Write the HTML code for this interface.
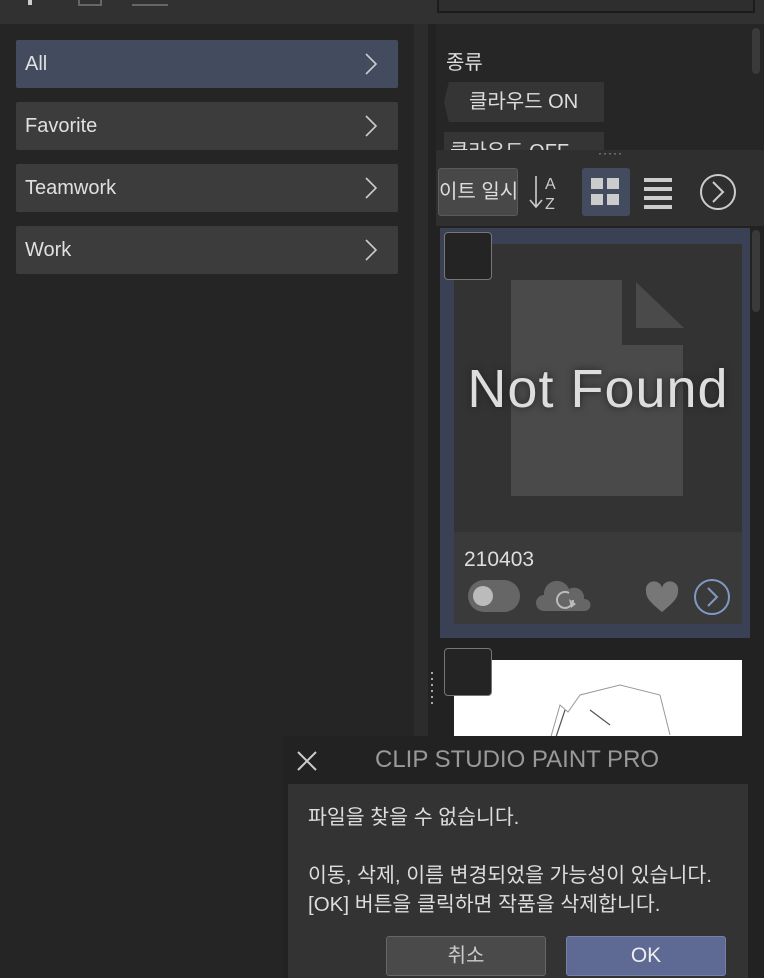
<!DOCTYPE html>
<html><head><meta charset="utf-8"><style>
*{margin:0;padding:0;box-sizing:border-box}
body{width:764px;height:978px;overflow:hidden;background:#2b2b2b;font-family:"Liberation Sans","Noto Sans CJK KR",sans-serif;color:#ddd;position:relative}
.a{position:absolute}
.btn{position:absolute;left:16px;width:382px;height:48px;background:#3c3c3c;border-radius:2px;font-size:20px;line-height:48px;padding-left:9px;color:#e0e0e0}
.btn svg{position:absolute;right:20px;top:13px}
</style></head><body>
<div class="a" style="left:0;top:0;width:764px;height:24px;background:#313131"></div>
<div class="a" style="left:437px;top:-4px;width:318px;height:17px;border:2px solid #1c1c1c;background:#2e2e2e"></div>
<div class="a" style="left:28px;top:0;width:4px;height:5px;background:#ccc"></div>
<div class="a" style="left:78px;top:0;width:24px;height:6px;border:2px solid #666;border-top:none"></div>
<div class="a" style="left:132px;top:4px;width:36px;height:2px;background:#666"></div>
<div class="a" style="left:0;top:24px;width:414px;height:954px;background:#252525"></div>
<div class="a" style="left:414px;top:24px;width:14px;height:954px;background:#2c2c2c"></div>
<div class="a" style="left:428px;top:24px;width:8px;height:954px;background:#222"></div>
<div class="btn" style="top:40px;background:#434b5e">All<svg width="14" height="22"><path d="M2 1l10 10-10 10" stroke="#ccc" stroke-width="1.6" fill="none"/></svg></div>
<div class="btn" style="top:102px">Favorite<svg width="14" height="22"><path d="M2 1l10 10-10 10" stroke="#ccc" stroke-width="1.6" fill="none"/></svg></div>
<div class="btn" style="top:164px">Teamwork<svg width="14" height="22"><path d="M2 1l10 10-10 10" stroke="#ccc" stroke-width="1.6" fill="none"/></svg></div>
<div class="btn" style="top:226px">Work<svg width="14" height="22"><path d="M2 1l10 10-10 10" stroke="#ccc" stroke-width="1.6" fill="none"/></svg></div>
<div class="a" style="left:436px;top:24px;width:328px;height:128px;background:#262626"></div>
<div class="a" style="left:752px;top:28px;width:8px;height:46px;background:#3a3a3a;border-radius:4px"></div>
<div class="a" style="left:446px;top:46px;font-size:20px;color:#ddd">종류</div>
<div class="a" style="left:444px;top:82px;width:160px;height:40px;background:#353535;font-size:20px;line-height:40px;padding-left:25px;clip-path:polygon(3% 0,100% 0,100% 100%,3% 100%,0 50%)">클라우드 ON</div>
<div class="a" style="left:444px;top:132px;width:160px;height:20px;background:#353535;overflow:hidden;font-size:20px;line-height:40px;padding-left:6px">클라우드 OFF</div>
<div class="a" style="left:436px;top:150px;width:328px;height:76px;background:#2f2f2f"></div>
<div class="a" style="left:598px;top:146px;font-size:12px;color:#aaa;letter-spacing:1px">·····</div>
<div class="a" style="left:438px;top:168px;width:80px;height:48px;background:#484848;border:1px solid #5a5a5a;border-radius:3px;font-size:20px;line-height:46px;padding-left:0;white-space:nowrap;overflow:hidden">이트 일시</div>
<svg class="a" style="left:526px;top:174px" width="38" height="36"><path d="M10 2v31M4 26l6 7 6-7" stroke="#ccc" stroke-width="1.6" fill="none"/><text x="19" y="15" font-size="16" fill="#ccc" font-family="Liberation Sans">A</text><text x="19" y="35" font-size="16" fill="#ccc" font-family="Liberation Sans">Z</text></svg>
<div class="a" style="left:582px;top:168px;width:48px;height:48px;background:#434b5e;border-radius:3px"></div>
<div class="a" style="left:591px;top:178px;width:12px;height:11px;background:#ccc"></div><div class="a" style="left:607px;top:178px;width:12px;height:11px;background:#ccc"></div>
<div class="a" style="left:591px;top:194px;width:12px;height:11px;background:#ccc"></div><div class="a" style="left:607px;top:194px;width:12px;height:11px;background:#ccc"></div>
<div class="a" style="left:644px;top:178px;width:28px;height:4px;background:#ccc;box-shadow:0 9px #ccc,0 18px #ccc,0 27px #ccc"></div>
<svg class="a" style="left:698px;top:172px" width="40" height="40"><circle cx="20" cy="20" r="17" stroke="#ccc" stroke-width="2" fill="none"/><path d="M15 10l10 10-10 10" stroke="#ccc" stroke-width="2" fill="none"/></svg>
<div class="a" style="left:436px;top:226px;width:328px;height:752px;background:#222"></div>
<div class="a" style="left:752px;top:230px;width:8px;height:82px;background:#3a3a3a;border-radius:4px"></div>
<div class="a" style="left:440px;top:228px;width:310px;height:410px;background:#3b4154"></div>
<div class="a" style="left:454px;top:244px;width:288px;height:288px;background:#333"></div>
<svg class="a" style="left:454px;top:244px" width="288" height="288"><path d="M57 36h111v65h61v151H57z" fill="#4a4a4a"/><path d="M182 38l48 46h-48z" fill="#4a4a4a"/></svg>
<div class="a" style="left:454px;top:358px;width:288px;text-align:center;font-size:54px;letter-spacing:1px;color:#ddd;text-shadow:0 0 8px #222;white-space:nowrap">Not Found</div>
<div class="a" style="left:444px;top:232px;width:48px;height:48px;background:#242424;border:1px solid #777;border-radius:4px"></div>
<div class="a" style="left:454px;top:532px;width:288px;height:92px;background:#3a3a3a"></div>
<div class="a" style="left:464px;top:548px;font-size:21px;color:#ddd">210403</div>
<div class="a" style="left:468px;top:580px;width:52px;height:32px;background:#666;border-radius:16px"></div>
<div class="a" style="left:473px;top:586px;width:20px;height:20px;background:#bbb;border-radius:50%"></div>
<svg class="a" style="left:536px;top:578px" width="56" height="36"><path d="M8 33a8 8 0 010-16a13 13 0 0125-6a10 10 0 0115 10a6 6 0 011 12z" fill="#666"/><path d="M37 22a8 8 0 11-4-7" stroke="#bbb" stroke-width="2" fill="none"/><path d="M33 21l7 5-5 4z" fill="#bbb"/></svg>
<svg class="a" style="left:644px;top:580px" width="36" height="34"><path d="M18 32C6 22 2 18 2 11a8 8 0 0116-3a8 8 0 0116 3c0 7-4 11-16 21z" fill="#777"/></svg>
<svg class="a" style="left:692px;top:577px" width="40" height="40"><circle cx="20" cy="20" r="17" stroke="#7f9ac0" stroke-width="2" fill="none"/><path d="M16 11l9 9-9 9" stroke="#7f9ac0" stroke-width="2" fill="none"/></svg>
<div class="a" style="left:454px;top:660px;width:288px;height:80px;background:#fff"></div>
<svg class="a" style="left:540px;top:680px" width="200" height="60"><path d="M10 60 L20 25 L28 32 L40 15 L80 5 L120 15 L130 55" stroke="#999" stroke-width="1" fill="none"/><path d="M15 60 L25 30 M50 30 L70 45" stroke="#555" stroke-width="1.2" fill="none"/></svg>
<div class="a" style="left:444px;top:648px;width:48px;height:48px;background:#242424;border:1px solid #777;border-radius:4px"></div>
<div class="a" style="left:431px;top:672px;width:2px;height:36px;background:repeating-linear-gradient(#aaa 0 2px,transparent 2px 6px)"></div>
<div class="a" style="left:282px;top:736px;width:482px;height:242px;background:#222"></div>
<svg class="a" style="left:296px;top:750px" width="22" height="22"><path d="M2 2l18 18M20 2L2 20" stroke="#ccc" stroke-width="2"/></svg>
<div class="a" style="left:375px;top:746px;font-size:24px;color:#999">CLIP STUDIO PAINT PRO</div>
<div class="a" style="left:288px;top:784px;width:460px;height:194px;background:#333"></div>
<div class="a" style="left:308px;top:803px;font-size:20.5px;line-height:29px;color:#ddd">파일을 찾을 수 없습니다.<br><br>이동, 삭제, 이름 변경되었을 가능성이 있습니다.<br>[OK] 버튼을 클릭하면 작품을 삭제합니다.</div>
<div class="a" style="left:386px;top:936px;width:160px;height:40px;background:#4a4a4a;border:1px solid #666;border-radius:3px;text-align:center;line-height:38px;font-size:20px;color:#ccc">취소</div>
<div class="a" style="left:566px;top:936px;width:160px;height:40px;background:#5e6a93;border:1px solid #7380a8;border-radius:3px;text-align:center;line-height:38px;font-size:21px;color:#eee">OK</div>
</body></html>
